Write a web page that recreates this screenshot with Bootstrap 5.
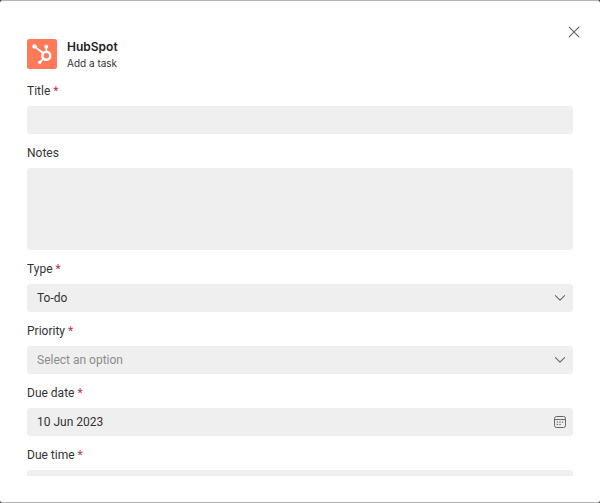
<!DOCTYPE html>
<html lang="en">
<head>
<meta charset="utf-8">
<meta name="viewport" content="width=device-width, initial-scale=1">
<title>HubSpot – Add a task</title>
<link href="https://cdn.jsdelivr.net/npm/bootstrap@5.3.0/dist/css/bootstrap.min.css" rel="stylesheet">
<style>
  body { font-family: Roboto, sans-serif; font-size: 12px; line-height: 16px; color: #333; background: #444; }
  .task-dialog { height: 100vh; padding: 38px 27px 26px; border: solid #b4b4b4; border-width: 1px 0; border-radius: 3px; background: #fff; }
  .app-header { gap: 10px; margin-bottom: 12px; font-family: Inter, sans-serif; }
  .app-name { font-size: 12px; line-height: 16px; font-weight: 600; color: #222; }
  .app-action { font-size: 10px; line-height: 16px; }
  .close-btn { top: 23px; right: 18px; color: #616161; line-height: 0; }
  .form-scroll { min-height: 0; overflow-y: auto; scrollbar-width: none; }
  .form-scroll::-webkit-scrollbar { display: none; }
  .field-group { margin-bottom: 11px; }
  .field-label { display: block; margin-bottom: 7px; }
  .required-mark { color: #c4314b; }
  .field-box, .field-box:focus { height: 28px; padding: 0 10px; border: 0; border-radius: 3px; background-color: #efefef; color: #333; font-size: 12px; line-height: 28px; }
  textarea.field-box { height: 82px; padding: 6px 10px; line-height: 16px; resize: none; }
  select.field-box { background-image: none; }
  .field-box.is-empty { color: #8c8c8c; }
  .field-icon { right: 7px; color: #666; pointer-events: none; }
  .field-icon-btn { right: 7px; color: #666; line-height: 0; }
</style>
<script src="https://cdn.jsdelivr.net/npm/bootstrap@5.3.0/dist/js/bootstrap.bundle.min.js" defer></script>
</head>
<body>
<main class="task-dialog d-flex flex-column position-relative" role="dialog" aria-label="Add a task">
  <button type="button" class="close-btn btn p-0 border-0 position-absolute" aria-label="Close">
    <svg width="16" height="16" viewBox="0 0 16 16" fill="none" stroke="currentColor" stroke-width="1.1" stroke-linecap="round"><path d="M3.2 3.2l9.6 9.6M12.8 3.2l-9.6 9.6"/></svg>
  </button>

  <header class="app-header d-flex align-items-start">
    <svg width="30" height="30" viewBox="0 0 30 30" aria-hidden="true">
      <rect width="30" height="30" rx="2.5" fill="#ff7a59"/>
      <g fill="none" stroke="#fff">
        <circle cx="19.3" cy="16.8" r="4" stroke-width="2.5"/>
        <path d="M19.3 12.5V8M16 14L8 7.8M16.3 19.8L13 23.2" stroke-width="1.7"/>
      </g>
      <g fill="#fff"><circle cx="19.3" cy="7.6" r="1.9"/><circle cx="7.5" cy="7.4" r="2.2"/><circle cx="12.7" cy="23.5" r="1.7"/></g>
    </svg>
    <div>
      <h1 class="app-name m-0">HubSpot</h1>
      <p class="app-action m-0">Add a task</p>
    </div>
  </header>

  <form class="form-scroll flex-grow-1">
    <div class="field-group">
      <label class="field-label" for="title">Title <span class="required-mark">*</span></label>
      <input class="field-box form-control" id="title" type="text" required>
    </div>
    <div class="field-group">
      <label class="field-label" for="notes">Notes</label>
      <textarea class="field-box form-control" id="notes"></textarea>
    </div>
    <div class="field-group">
      <label class="field-label" for="type">Type <span class="required-mark">*</span></label>
      <div class="position-relative d-flex align-items-center">
        <select class="field-box form-select" id="type"><option>To-do</option></select>
        <svg class="field-icon position-absolute" width="12" height="12" viewBox="0 0 12 12" fill="none" stroke="currentColor" stroke-width="1.1" stroke-linecap="round" stroke-linejoin="round"><path d="M1.4 3.7L6 8.2l4.6-4.5"/></svg>
      </div>
    </div>
    <div class="field-group">
      <label class="field-label" for="priority">Priority <span class="required-mark">*</span></label>
      <div class="position-relative d-flex align-items-center">
        <select class="field-box form-select is-empty" id="priority"><option>Select an option</option></select>
        <svg class="field-icon position-absolute" width="12" height="12" viewBox="0 0 12 12" fill="none" stroke="currentColor" stroke-width="1.1" stroke-linecap="round" stroke-linejoin="round"><path d="M1.4 3.7L6 8.2l4.6-4.5"/></svg>
      </div>
    </div>
    <div class="field-group">
      <label class="field-label" for="due-date">Due date <span class="required-mark">*</span></label>
      <div class="position-relative d-flex align-items-center">
        <input class="field-box form-control" id="due-date" type="text" value="10 Jun 2023" required>
        <button type="button" class="field-icon-btn btn p-0 border-0 position-absolute" aria-label="Choose a date">
          <svg width="12" height="12" viewBox="0 0 12 12" fill="none" stroke="currentColor"><rect x=".5" y=".5" width="11" height="11" rx="2"/><path d="M.5 3.5h11"/><g fill="currentColor" stroke="none"><circle cx="3.4" cy="6" r=".75"/><circle cx="6" cy="6" r=".75"/><circle cx="8.6" cy="6" r=".75"/><circle cx="3.4" cy="8.6" r=".75"/><circle cx="6" cy="8.6" r=".75"/></g></svg>
        </button>
      </div>
    </div>
    <div>
      <label class="field-label" for="due-time">Due time <span class="required-mark">*</span></label>
      <select class="field-box form-select" id="due-time"><option></option></select>
    </div>
  </form>
</main>
</body>
</html>
